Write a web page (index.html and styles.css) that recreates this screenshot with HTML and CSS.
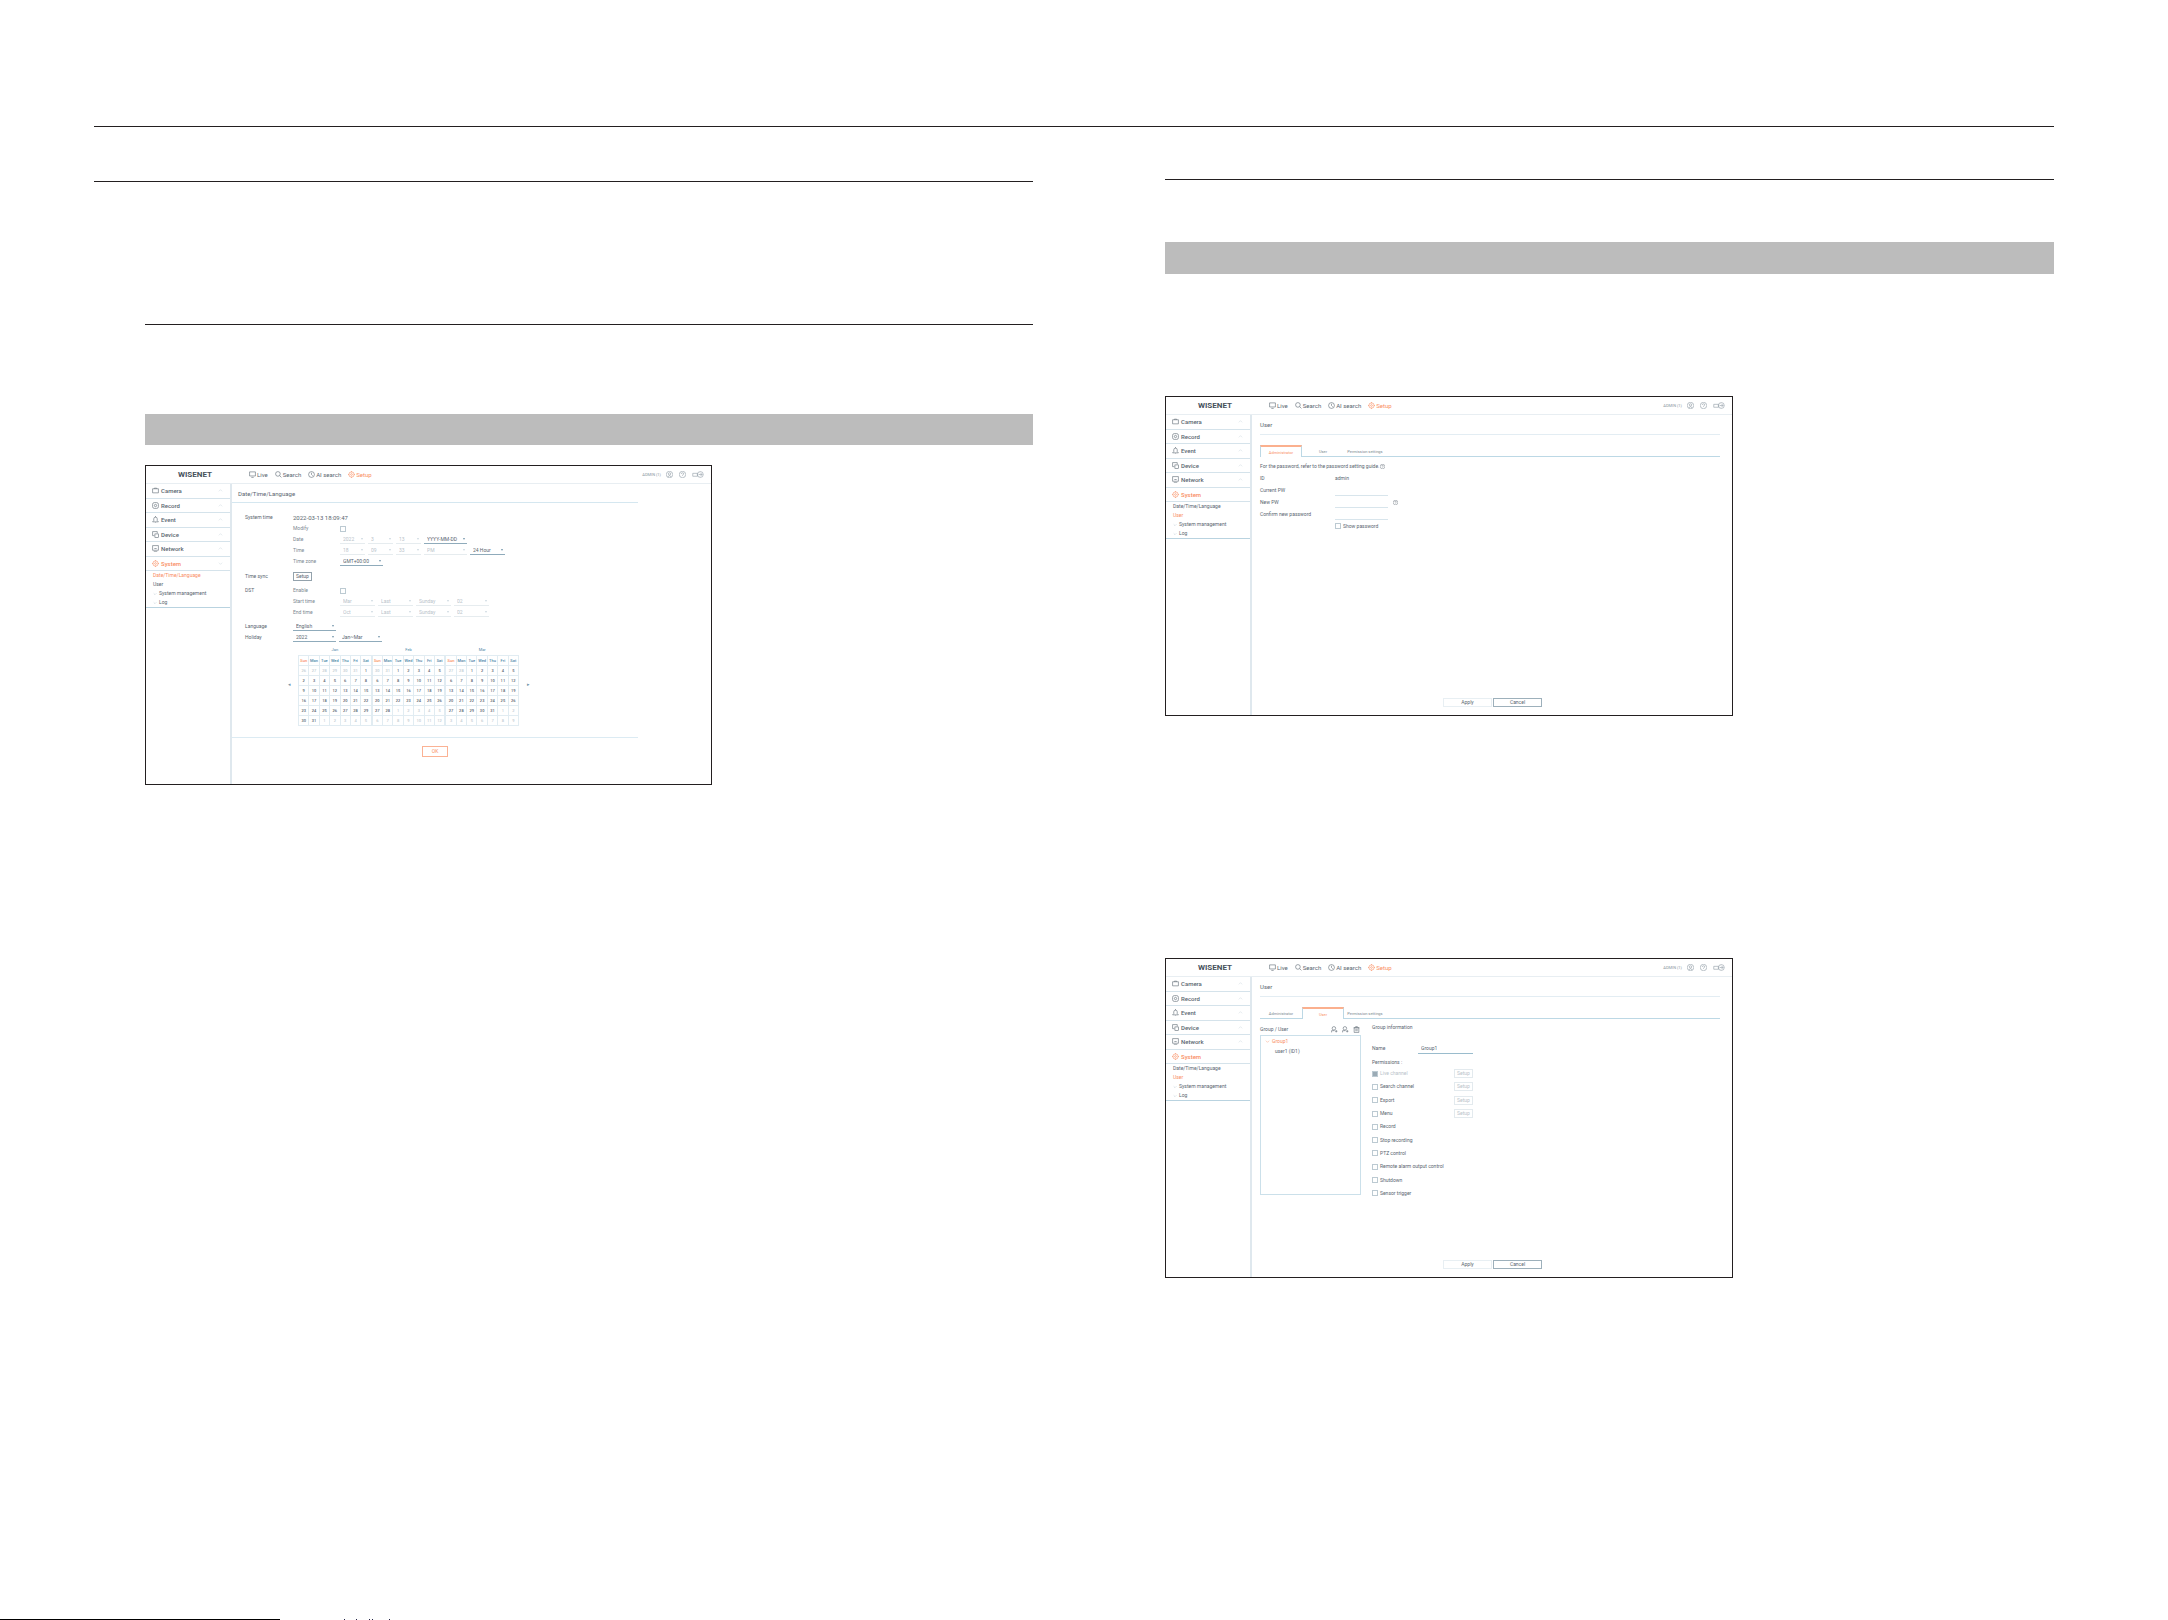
FILE: index.html
```html
<!DOCTYPE html>
<html lang="en">
<head>
  <meta charset="UTF-8">
  <meta name="viewport" content="width=device-width, initial-scale=1.0">
  <title>System setup</title>
  <link rel="stylesheet" href="styles.css">
</head>
<body>
  <!-- shared icons -->
  <svg class="sprite" aria-hidden="true">
    <symbol id="i-live" viewBox="0 0 12 12"><path d="M1 1.500h10v7H1zM4 11h4"/></symbol>
    <symbol id="i-search" viewBox="0 0 12 12"><circle cx="5" cy="5" r="4"/><path d="M8 8l3 3"/></symbol>
    <symbol id="i-ai" viewBox="0 0 12 12"><circle cx="6" cy="6" r="5"/><path d="M6 3v3l2 2"/></symbol>
    <symbol id="i-gear" viewBox="0 0 12 12"><circle cx="6" cy="6" r="4.500"/><circle cx="6" cy="6" r="1.500"/><path d="M6 0v2M6 10v2M0 6h2M10 6h2"/></symbol>
    <symbol id="i-camera" viewBox="0 0 12 12"><path d="M1 3h10v7H1zM4 3v-1h4v1"/></symbol>
    <symbol id="i-record" viewBox="0 0 12 12"><rect x="1" y="1" width="10" height="10" rx="3"/><circle cx="6" cy="6" r="2"/></symbol>
    <symbol id="i-event" viewBox="0 0 12 12"><path d="M1 10h10L9 8V5a3 3 0 0 0-6 0v3zM6 0v2M5 12h2"/></symbol>
    <symbol id="i-device" viewBox="0 0 12 12"><path d="M4 8H1V1h8v3"/><rect x="5" y="5" width="6" height="6"/></symbol>
    <symbol id="i-network" viewBox="0 0 12 12"><path d="M1 1h10v8H1zM3 11.500h6M4 6h4"/></symbol>
    <symbol id="i-user" viewBox="0 0 12 12"><circle cx="6" cy="6" r="5.500"/><circle cx="6" cy="5" r="2"/><path d="M3 10q3-4 6 0"/></symbol>
    <symbol id="i-help" viewBox="0 0 12 12"><circle cx="6" cy="6" r="5.500"/><path d="M4 5q0-2 2-2t2 2q0 1-2 2v1"/></symbol>
    <symbol id="i-exit" viewBox="0 0 20 12"><path d="M1 4h8v5H1zM11 6h6M14 3l3 3-3 3"/><circle cx="14" cy="6" r="5"/></symbol>
    <symbol id="i-add" viewBox="0 0 12 12"><circle cx="5" cy="4" r="3"/><path d="M1 11V8h5M7 9h4M9 7v4"/></symbol>
    <symbol id="i-trash" viewBox="0 0 12 12"><path d="M2 3h8v8H2zM1 3h10M4 1h4M5 5v4M7 5v4"/></symbol>
    <symbol id="i-up" viewBox="0 0 12 12"><path d="M2 8l4-4 4 4"/></symbol>
    <symbol id="i-down" viewBox="0 0 12 12"><path d="M2 4l4 4 4-4"/></symbol>
  </svg>

  <div class="page">
    <hr class="rule rule-top">

    <div class="columns">
      <section class="column column-left">
        <hr class="rule">
        <div class="indent">
          <hr class="rule">
          <div class="band"></div>

          <div class="screen">
            <header class="topbar">
              <span class="logo">WISENET</span>
              <nav class="menu">
                <a href="#"><svg><use href="#i-live"/></svg>Live</a>
                <a href="#"><svg><use href="#i-search"/></svg>Search</a>
                <a href="#"><svg><use href="#i-ai"/></svg>AI search</a>
                <a href="#" class="on"><svg><use href="#i-gear"/></svg>Setup</a>
              </nav>
              <div class="account">
                <span>ADMIN (1)</span>
                <svg><use href="#i-user"/></svg>
                <svg><use href="#i-help"/></svg>
                <svg class="wide"><use href="#i-exit"/></svg>
              </div>
            </header>
            <div class="body">
              <aside class="sidebar">
                <nav class="groups">
                  <a href="#"><svg><use href="#i-camera"/></svg>Camera<svg class="arrow"><use href="#i-up"/></svg></a>
                  <a href="#"><svg><use href="#i-record"/></svg>Record<svg class="arrow"><use href="#i-up"/></svg></a>
                  <a href="#"><svg><use href="#i-event"/></svg>Event<svg class="arrow"><use href="#i-up"/></svg></a>
                  <a href="#"><svg><use href="#i-device"/></svg>Device<svg class="arrow"><use href="#i-up"/></svg></a>
                  <a href="#"><svg><use href="#i-network"/></svg>Network<svg class="arrow"><use href="#i-up"/></svg></a>
                  <a href="#" class="on"><svg><use href="#i-gear"/></svg>System<svg class="arrow"><use href="#i-down"/></svg></a>
                </nav>
                <nav class="pages">
                  <a href="#" class="on">Date/Time/Language</a>
                  <a href="#">User</a>
                  <a href="#"><svg><use href="#i-down"/></svg>System management</a>
                  <a href="#"><svg><use href="#i-down"/></svg>Log</a>
                </nav>
              </aside>

              <main class="main main-date">
                <h2>Date/Time/Language</h2>
                <form class="form">
                  <div class="row"><span class="name">System time</span><span class="value">2022-03-13 18:09:47</span></div>
                  <div class="row"><span class="name"></span><label class="sub" for="modify">Modify</label><input type="checkbox" id="modify"></div>
                  <div class="row">
                    <span class="name"></span><span class="sub">Date</span>
                    <span class="pick w25"><select aria-label="Year" disabled><option>2022</option></select></span>
                    <span class="pick w25"><select aria-label="Month" disabled><option>3</option></select></span>
                    <span class="pick w25"><select aria-label="Day" disabled><option>13</option></select></span>
                    <span class="pick w43"><select aria-label="Date format"><option>YYYY-MM-DD</option></select></span>
                  </div>
                  <div class="row">
                    <span class="name"></span><span class="sub">Time</span>
                    <span class="pick w25"><select aria-label="Hour" disabled><option>18</option></select></span>
                    <span class="pick w25"><select aria-label="Minute" disabled><option>09</option></select></span>
                    <span class="pick w25"><select aria-label="Second" disabled><option>33</option></select></span>
                    <span class="pick w43"><select aria-label="AM or PM" disabled><option>PM</option></select></span>
                    <span class="pick w35"><select aria-label="Time format"><option>24 Hour</option></select></span>
                  </div>
                  <div class="row">
                    <span class="name"></span><label class="sub" for="zone">Time zone</label>
                    <span class="pick w43"><select id="zone"><option>GMT+00:00</option></select></span>
                  </div>
                  <div class="row row-tall"><span class="name">Time sync</span><button type="button" class="small dark">Setup</button></div>
                  <div class="row"><span class="name">DST</span><label class="sub" for="dst">Enable</label><input type="checkbox" id="dst"></div>
                  <div class="row">
                    <span class="name"></span><span class="sub">Start time</span>
                    <span class="pick w35"><select aria-label="Start month" disabled><option>Mar</option></select></span>
                    <span class="pick w35"><select aria-label="Start week" disabled><option>Last</option></select></span>
                    <span class="pick w35"><select aria-label="Start day" disabled><option>Sunday</option></select></span>
                    <span class="pick w35"><select aria-label="Start hour" disabled><option>02</option></select></span>
                  </div>
                  <div class="row">
                    <span class="name"></span><span class="sub">End time</span>
                    <span class="pick w35"><select aria-label="End month" disabled><option>Oct</option></select></span>
                    <span class="pick w35"><select aria-label="End week" disabled><option>Last</option></select></span>
                    <span class="pick w35"><select aria-label="End day" disabled><option>Sunday</option></select></span>
                    <span class="pick w35"><select aria-label="End hour" disabled><option>02</option></select></span>
                  </div>
                  <div class="row row-gap">
                    <label class="name" for="lang">Language</label>
                    <span class="pick w43"><select id="lang"><option>English</option></select></span>
                  </div>
                  <div class="row">
                    <label class="name" for="holiday">Holiday</label>
                    <span class="pick w43"><select id="holiday"><option>2022</option></select></span>
                    <span class="pick w43"><select aria-label="Months"><option>Jan~Mar</option></select></span>
                  </div>
                  <div class="calendar">
                    <button type="button" aria-label="Previous">◂</button>
                    <div class="months" id="months"></div>
                    <button type="button" aria-label="Next">▸</button>
                  </div>
                </form>
                <div class="foot"><button type="button" class="ok">OK</button></div>
              </main>
            </div>
          </div>
        </div>
      </section>

      <section class="column column-right">
        <hr class="rule">
        <div class="band"></div>

        <div class="screen">
          <header class="topbar">
            <span class="logo">WISENET</span>
            <nav class="menu">
              <a href="#"><svg><use href="#i-live"/></svg>Live</a>
              <a href="#"><svg><use href="#i-search"/></svg>Search</a>
              <a href="#"><svg><use href="#i-ai"/></svg>AI search</a>
              <a href="#" class="on"><svg><use href="#i-gear"/></svg>Setup</a>
            </nav>
            <div class="account">
              <span>ADMIN (1)</span>
              <svg><use href="#i-user"/></svg>
              <svg><use href="#i-help"/></svg>
              <svg class="wide"><use href="#i-exit"/></svg>
            </div>
          </header>
          <div class="body">
            <aside class="sidebar">
              <nav class="groups">
                <a href="#"><svg><use href="#i-camera"/></svg>Camera<svg class="arrow"><use href="#i-up"/></svg></a>
                <a href="#"><svg><use href="#i-record"/></svg>Record<svg class="arrow"><use href="#i-up"/></svg></a>
                <a href="#"><svg><use href="#i-event"/></svg>Event<svg class="arrow"><use href="#i-up"/></svg></a>
                <a href="#"><svg><use href="#i-device"/></svg>Device<svg class="arrow"><use href="#i-up"/></svg></a>
                <a href="#"><svg><use href="#i-network"/></svg>Network<svg class="arrow"><use href="#i-up"/></svg></a>
                <a href="#" class="on"><svg><use href="#i-gear"/></svg>System</a>
              </nav>
              <nav class="pages">
                <a href="#">Date/Time/Language</a>
                <a href="#" class="on">User</a>
                <a href="#"><svg><use href="#i-down"/></svg>System management</a>
                <a href="#"><svg><use href="#i-down"/></svg>Log</a>
              </nav>
            </aside>

            <main class="main main-user">
              <h2>User</h2>
              <div class="tabs">
                <button type="button" class="on">Administrator</button>
                <button type="button">User</button>
                <button type="button">Permission settings</button>
              </div>
              <form class="account-form">
                <p>For the password, refer to the password setting guide. <svg><use href="#i-help"/></svg></p>
                <div class="line"><span class="caption">ID</span><span>admin</span></div>
                <div class="line"><label class="caption" for="pw">Current PW</label><input type="password" id="pw"></div>
                <div class="line"><label class="caption" for="newpw">New PW</label><input type="password" id="newpw"><svg><use href="#i-help"/></svg></div>
                <div class="line"><label class="caption" for="confirm">Confirm new password</label><input type="password" id="confirm"></div>
                <div class="line"><span class="caption"></span><label class="check"><input type="checkbox">Show password</label></div>
              </form>
              <div class="actions">
                <button type="button">Apply</button>
                <button type="button" class="dark">Cancel</button>
              </div>
            </main>
          </div>
        </div>

        <div class="screen">
          <header class="topbar">
            <span class="logo">WISENET</span>
            <nav class="menu">
              <a href="#"><svg><use href="#i-live"/></svg>Live</a>
              <a href="#"><svg><use href="#i-search"/></svg>Search</a>
              <a href="#"><svg><use href="#i-ai"/></svg>AI search</a>
              <a href="#" class="on"><svg><use href="#i-gear"/></svg>Setup</a>
            </nav>
            <div class="account">
              <span>ADMIN (1)</span>
              <svg><use href="#i-user"/></svg>
              <svg><use href="#i-help"/></svg>
              <svg class="wide"><use href="#i-exit"/></svg>
            </div>
          </header>
          <div class="body">
            <aside class="sidebar">
              <nav class="groups">
                <a href="#"><svg><use href="#i-camera"/></svg>Camera<svg class="arrow"><use href="#i-up"/></svg></a>
                <a href="#"><svg><use href="#i-record"/></svg>Record<svg class="arrow"><use href="#i-up"/></svg></a>
                <a href="#"><svg><use href="#i-event"/></svg>Event<svg class="arrow"><use href="#i-up"/></svg></a>
                <a href="#"><svg><use href="#i-device"/></svg>Device<svg class="arrow"><use href="#i-up"/></svg></a>
                <a href="#"><svg><use href="#i-network"/></svg>Network<svg class="arrow"><use href="#i-up"/></svg></a>
                <a href="#" class="on"><svg><use href="#i-gear"/></svg>System</a>
              </nav>
              <nav class="pages">
                <a href="#">Date/Time/Language</a>
                <a href="#" class="on">User</a>
                <a href="#"><svg><use href="#i-down"/></svg>System management</a>
                <a href="#"><svg><use href="#i-down"/></svg>Log</a>
              </nav>
            </aside>

            <main class="main main-user">
              <h2>User</h2>
              <div class="tabs">
                <button type="button">Administrator</button>
                <button type="button" class="on">User</button>
                <button type="button">Permission settings</button>
              </div>
              <div class="split">
                <div class="users">
                  <div class="users-head">
                    <span>Group / User</span>
                    <svg><use href="#i-add"/></svg>
                    <svg><use href="#i-add"/></svg>
                    <svg><use href="#i-trash"/></svg>
                  </div>
                  <div class="tree">
                    <div class="on"><svg><use href="#i-down"/></svg>Group1</div>
                    <div class="leaf">user1 (ID1)</div>
                  </div>
                </div>
                <form class="group">
                  <h3>Group information</h3>
                  <div class="group-name"><label for="gname">Name</label><input type="text" id="gname" value="Group1"></div>
                  <h3>Permissions :</h3>
                  <div class="perms">
                    <div class="off"><label class="check"><input type="checkbox" checked disabled>Live channel</label><button type="button" class="small">Setup</button></div>
                    <div><label class="check"><input type="checkbox">Search channel</label><button type="button" class="small">Setup</button></div>
                    <div><label class="check"><input type="checkbox">Export</label><button type="button" class="small">Setup</button></div>
                    <div><label class="check"><input type="checkbox">Menu</label><button type="button" class="small">Setup</button></div>
                    <div><label class="check"><input type="checkbox">Record</label></div>
                    <div><label class="check"><input type="checkbox">Stop recording</label></div>
                    <div><label class="check"><input type="checkbox">PTZ control</label></div>
                    <div><label class="check"><input type="checkbox">Remote alarm output control</label></div>
                    <div><label class="check"><input type="checkbox">Shutdown</label></div>
                    <div><label class="check"><input type="checkbox">Sensor trigger</label></div>
                  </div>
                </form>
              </div>
              <div class="actions">
                <button type="button">Apply</button>
                <button type="button" class="dark">Cancel</button>
              </div>
            </main>
          </div>
        </div>
      </section>
    </div>

    <footer class="bottom">
      <div class="edge"></div>
      <svg class="marks" viewBox="0 0 48 1"><path d="M0 0h1v1H0zM12 0h1v1h-1zM25 0h1v1h-1zM28 0h1v1h-1zM45 0h1v1h-1z"/></svg>
    </footer>
  </div>

  <script>
    const days = ['Sun', 'Mon', 'Tue', 'Wed', 'Thu', 'Fri', 'Sat'];
    const months = ['Jan', 'Feb', 'Mar'];

    months.forEach((name, month) => {
      const table = document.createElement('table');
      table.createCaption().textContent = name;
      const head = table.createTHead().insertRow();
      days.forEach(day => {
        const th = document.createElement('th');
        th.textContent = day;
        head.appendChild(th);
      });

      // always six weeks, padded with the neighbouring months
      const body = table.createTBody();
      const first = new Date(2022, month, 1).getDay();
      for (let week = 0; week < 6; week++) {
        const row = body.insertRow();
        for (let i = 0; i < 7; i++) {
          const date = new Date(2022, month, 1 - first + week * 7 + i);
          const cell = row.insertCell();
          cell.textContent = date.getDate();
          if (date.getMonth() !== month) cell.className = 'other';
        }
      }
      document.getElementById('months').appendChild(table);
    });
  </script>
</body>
</html>
```

FILE: styles.css
```css
* {
  box-sizing: border-box;
}
body {
  margin: 0;
  background-color: #ffffff;
  font-family: Roboto, "Open Sans", sans-serif;
  color: #5a6670;
}
a {
  color: inherit;
  text-decoration: none;
}
button, input, select {
  font: inherit;
  color: inherit;
  margin: 0;
  padding: 0;
  border: 0;
  background: none;
}
svg {
  width: 7px;
  height: 7px;
  flex: none;
  fill: none;
  stroke: currentColor;
}
.sprite {
  position: absolute;
  width: 0;
  height: 0;
}

/* document page */
.page {
  display: flex;
  flex-direction: column;
  min-height: 100vh;
  padding-top: 126px;
}
.rule {
  margin: 0;
  border: 0;
  height: 1px;
  background-color: #231f20;
}
.rule-top {
  margin: 0 114px 0 94px;
}
.columns {
  display: grid;
  grid-template-columns: 939fr 889fr;
  column-gap: 132px;
  margin: 0 114px 0 94px;
}
.column-left {
  padding-top: 54px;
}
.column-right {
  padding-top: 52px;
}
.indent {
  margin: 142px 0 0 51px;
}
.band {
  height: 32px;
  background-color: #bcbcbc;
}
.column-left .band {
  height: 31px;
  margin: 89px 0 20px;
}
.column-right .band {
  margin: 62px 0 122px;
}
.bottom {
  display: flex;
  gap: 64px;
  height: 1px;
  margin-top: auto;
}
.edge {
  width: 280px;
  background-color: #000000;
}
.marks {
  width: 48px;
  height: 1px;
  fill: #222244;
  stroke: none;
}

/* application window */
.screen {
  display: flex;
  flex-direction: column;
  width: 568px;
  max-width: 100%;
  min-height: 320px;
  border: 1px solid #231f20;
  font-size: 5px;
  line-height: 7px;
}
.column-left .screen {
  width: 567px;
}
.screen + .screen {
  margin-top: 242px;
}
.topbar {
  display: flex;
  align-items: center;
  height: 18px;
  padding: 0 7px 0 32px;
  border-bottom: 1px solid #e8eef2;
  font-size: 6px;
}
.logo {
  width: 71px;
  font-size: 8px;
  font-weight: bold;
  color: #46515b;
}
.menu {
  display: flex;
  gap: 7px;
}
.menu a {
  display: flex;
  align-items: center;
  gap: 1px;
}
.on, .menu .on, .groups .on {
  color: #f98d62;
}
.account {
  display: flex;
  align-items: center;
  gap: 6px;
  margin-left: auto;
  font-size: 4px;
  color: #8b98a2;
}
.account span {
  margin-right: -1px;
}
.account .wide {
  width: 12px;
}
.body {
  display: flex;
  flex: 1;
}
.sidebar {
  width: 86px;
  border-right: 2px solid #dfe8ee;
}
.groups {
  display: grid;
  grid-template-rows: repeat(6, 1fr);
  height: 87px;
  font-size: 6px;
  font-weight: 500;
}
.groups a {
  display: flex;
  align-items: center;
  gap: 2px;
  padding: 0 7px 0 6px;
  border-bottom: 1px solid #d5e3eb;
}
.groups .arrow {
  width: 5px;
  height: 5px;
  margin-left: auto;
  color: #c3d0d8;
}
.pages {
  border-bottom: 1px solid #b9d3e0;
}
.pages a {
  display: flex;
  align-items: center;
  gap: 2px;
  height: 9px;
  padding-left: 7px;
}
.pages svg {
  width: 4px;
  height: 4px;
  color: #9fb0bb;
}
.main {
  display: flex;
  flex-direction: column;
  flex: 1;
}
.main h2 {
  display: flex;
  align-items: center;
  margin: 0;
  border-bottom: 1px solid #d5e7f0;
  font-size: 6px;
  font-weight: 400;
}

/* date and time */
.main-date {
  margin-right: 73px;
}
.main-date h2 {
  height: 19px;
  padding-left: 6px;
}
.form {
  padding: 9px 0 11px 13px;
}
.row {
  display: flex;
  align-items: center;
  gap: 3px;
  height: 11px;
}
.row-tall {
  height: 18px;
}
.row-gap {
  margin-top: 3px;
}
.name {
  width: 45px;
}
.sub {
  width: 44px;
  color: #7b8891;
}
.value {
  font-size: 6px;
}
.pick {
  position: relative;
  height: 9px;
  border-bottom: 1px solid #8fabbb;
}
.pick::after {
  content: "";
  position: absolute;
  right: 2px;
  top: 3px;
  border: 1px solid transparent;
  border-top: 2px solid #7395aa;
}
.pick select {
  display: block;
  appearance: none;
  width: 100%;
  height: 8px;
  padding-left: 3px;
  line-height: 8px;
}
.pick:has(:disabled) {
  border-color: #e6ecef;
}
.pick:has(:disabled)::after {
  border-top-color: #ccd8df;
}
.pick select:disabled {
  color: #b9c3ca;
  opacity: 1;
}
.w25 {
  width: 25px;
}
.w35 {
  width: 35px;
}
.w43 {
  width: 43px;
}
input[type="checkbox"] {
  appearance: none;
  width: 6px;
  height: 6px;
  border: 1px solid #bccad2;
}
input[type="checkbox"]:checked {
  background-color: #9babb5;
}
.small {
  width: 19px;
  height: 9px;
  border: 1px solid #e3eaee;
  color: #b9c3ca;
  line-height: 7px;
}
.small.dark {
  border-color: #93a2ac;
  color: #5a6670;
}
.calendar {
  display: flex;
  align-items: center;
  margin-left: 35px;
}
.calendar > button {
  width: 18px;
  height: 7px;
  color: #7395aa;
}
.months {
  display: grid;
  grid-template-columns: repeat(3, 1fr);
  width: 221px;
}
.months table {
  width: 100%;
  table-layout: fixed;
  border-collapse: collapse;
}
.months caption {
  height: 12px;
  padding-top: 3px;
  font-size: 4px;
  color: #4d87a8;
}
.months th, .months td {
  height: 10px;
  padding: 0;
  border: 1px solid #e1ecf2;
  text-align: center;
  font-weight: 500;
  font-size: 4px;
  line-height: 9px;
}
.months th {
  color: #4d87a8;
}
.months th:first-child {
  color: #f98d62;
}
.months .other {
  color: #c3cdd3;
}
.foot {
  display: flex;
  justify-content: center;
  padding-top: 8px;
  border-top: 1px solid #dcebf3;
}
.ok {
  width: 26px;
  height: 11px;
  border: 1px solid #fbb294;
  color: #f98d62;
}

/* user */
.main-user {
  padding: 0 12px 0 8px;
}
.main-user h2 {
  height: 20px;
  border-color: #e3edf3;
}
.tabs {
  display: flex;
  height: 12px;
  margin-top: 10px;
  border-bottom: 1px solid #bcd8e5;
}
.tabs button {
  min-width: 42px;
  height: 12px;
  font-size: 4px;
  color: #7b8891;
}
.tabs .on {
  border: 1px solid #bcd8e5;
  border-top: 2px solid #fbb08e;
  border-bottom: 0;
  background-color: #ffffff;
  color: #f98d62;
}
.account-form p {
  display: flex;
  align-items: center;
  gap: 1px;
  height: 8px;
  margin: 5px 0 2px;
}
.account-form svg {
  width: 5px;
  height: 5px;
}
.line {
  display: flex;
  align-items: center;
  height: 12px;
}
.caption {
  width: 75px;
}
.line input:not([type="checkbox"]) {
  width: 53px;
  height: 11px;
  margin-right: 5px;
  border-bottom: 1px solid #d8e5ec;
}
.check {
  display: flex;
  align-items: center;
  gap: 2px;
}
.actions {
  display: flex;
  gap: 1px;
  margin: auto 178px 8px auto;
}
.actions button {
  width: 49px;
  height: 9px;
  border: 1px solid #e8eff3;
  line-height: 7px;
}
.actions .dark {
  border-color: #9db0bb;
}
.split {
  display: flex;
  gap: 11px;
  padding-top: 5px;
}
.users {
  width: 101px;
}
.users-head {
  display: flex;
  align-items: center;
  gap: 4px;
  height: 10px;
  padding-right: 1px;
}
.users-head span {
  margin-right: auto;
}
.tree {
  height: 160px;
  margin-top: 1px;
  border: 1px solid #cbe0ea;
}
.tree div {
  display: flex;
  align-items: center;
  gap: 2px;
  height: 10px;
  padding-left: 4px;
}
.tree .leaf {
  padding-left: 14px;
}
.tree svg {
  width: 5px;
  height: 5px;
}
.group {
  width: 101px;
}
.group h3 {
  margin: 0;
  height: 8px;
  font-size: 5px;
  font-weight: 400;
}
.group-name {
  display: flex;
  align-items: center;
  height: 12px;
  margin: 10px 0 5px;
}
.group-name label {
  width: 46px;
}
.group-name input {
  width: 55px;
  height: 12px;
  padding-left: 3px;
  border-bottom: 1px solid #9abccd;
}
.perms {
  display: grid;
  grid-template-rows: repeat(10, 1fr);
  height: 133px;
}
.perms div {
  display: flex;
  align-items: center;
  justify-content: space-between;
}
.perms .off {
  color: #b9c3ca;
}
```
